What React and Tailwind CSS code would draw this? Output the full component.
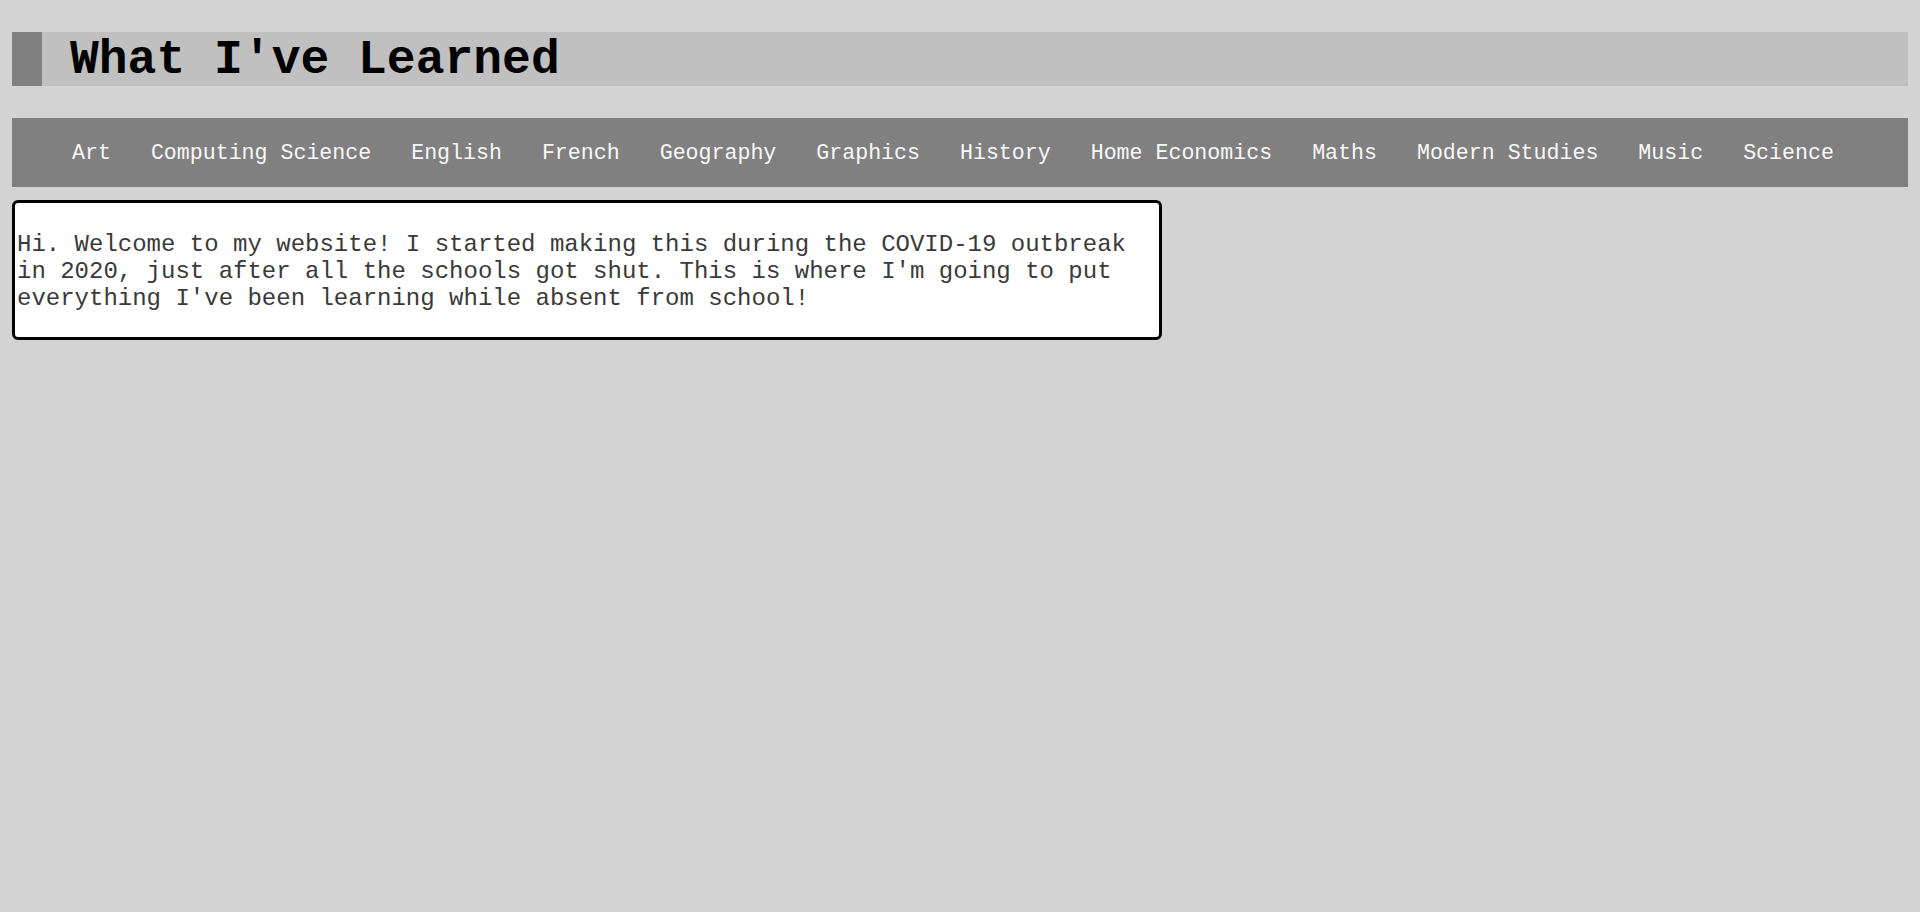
export default function App() {
  const subjects = [
    "Art",
    "Computing Science",
    "English",
    "French",
    "Geography",
    "Graphics",
    "History",
    "Home Economics",
    "Maths",
    "Modern Studies",
    "Music",
    "Science",
  ];
  return (
    <div
      className="min-h-[912px] bg-[#d3d3d3] px-[12px] pt-[32px]"
      style={{ fontFamily: '"Liberation Mono", "Courier New", monospace' }}
    >
      <header className="flex h-[54px] items-center bg-[#c0c0c0]">
        <div className="h-full w-[30px] bg-[#808080]" />
        <h1 className="pl-[28px] pt-[2px] text-[48px] font-bold leading-[54px] text-black">
          What I've Learned
        </h1>
      </header>
      <nav className="mt-[32px] flex h-[69px] items-center bg-[#808080] pl-[40px] pt-[2px]">
        <ul className="flex items-center">
          {subjects.map((s) => (
            <li key={s} className="px-[20px] text-[21.6px] leading-none whitespace-pre text-[#f8f8f8]">
              {s}
            </li>
          ))}
        </ul>
      </nav>
      <main className="mt-[13px] w-[1150px] rounded-[6px] border-[3px] border-black bg-white p-[2px]">
        <p className="mt-[26px] mb-[22px] text-[24px] leading-[27.2px] text-[#3a3a3a]">
          Hi. Welcome to my website! I started making this during the COVID-19 outbreak in 2020, just after all the schools got shut. This is where I'm going to put everything I've been learning while absent from school!
        </p>
      </main>
    </div>
  );
}
